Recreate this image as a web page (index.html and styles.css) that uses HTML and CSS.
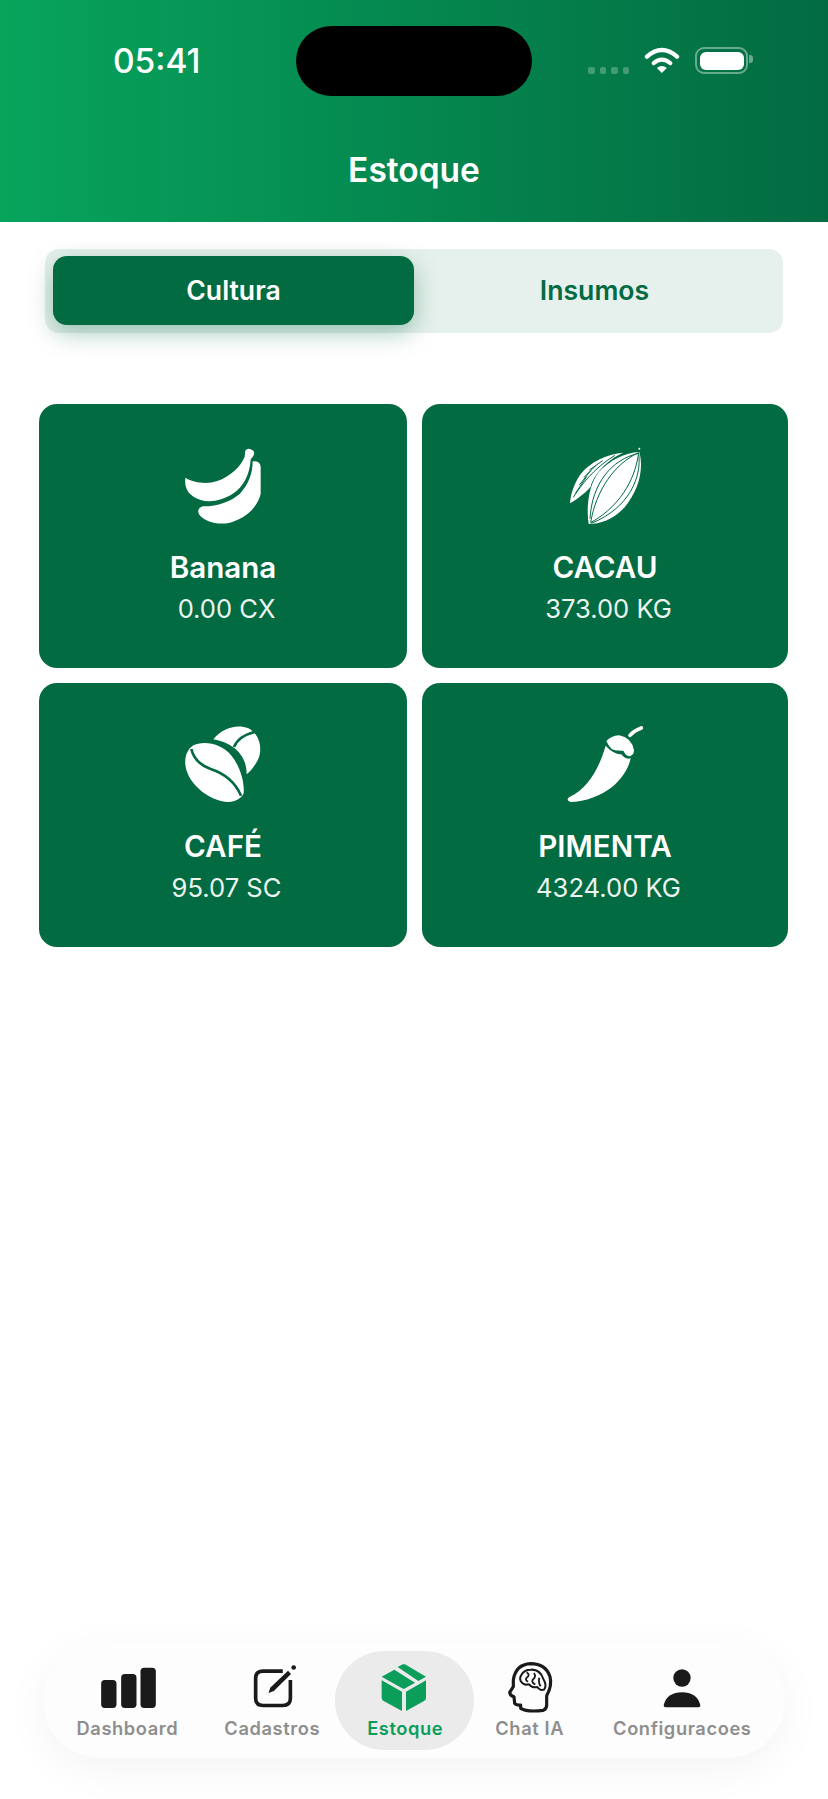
FILE: index.html
```html
<!DOCTYPE html>
<html lang="pt-BR">
<head>
    <meta charset="UTF-8">
    <meta name="viewport" content="width=device-width, initial-scale=1.0">
    <title>Estoque</title>
    <link rel="stylesheet" href="styles.css">
</head>
<body>
    <div class="app">
        <header class="header">
            <div class="status-bar">
                <span class="time">05:41</span>
                <div class="island"></div>
                <div class="status-icons">
                    <div class="signal"><i></i><i></i><i></i><i></i></div>
                    <svg class="wifi" viewBox="245 50 115 84">
                        <path d="M257 82Q302 42 348 82" fill="none" stroke="#fff" stroke-width="13" stroke-linecap="round"/>
                        <path d="M277 102Q302 80 328 102" fill="none" stroke="#fff" stroke-width="12" stroke-linecap="round"/>
                        <path d="M287 116Q302 104 317 116L302 131Z" fill="#fff"/>
                    </svg>
                    <div class="battery"><div class="battery-level"></div></div>
                </div>
            </div>
            <h1 class="title">Estoque</h1>
        </header>

        <div class="tabs">
            <div class="tab tab-active">Cultura</div>
            <div class="tab">Insumos</div>
        </div>

        <div class="cards">
            <div class="card">
                <svg class="card-icon" viewBox="465 158 228 228">
                    <path fill="#fff" d="M466 247C490 262 530 268 562 257C600 244 632 214 644 184L646 166Q654 155 668 165Q677 172 668 185L662 192C660 228 648 262 622 285C590 313 545 324 512 314C480 302 462 285 466 247Z"/>
                    <path fill="#fff" d="M668 198Q690 196 692 214L692 296C682 335 650 368 600 382C565 390 525 380 508 358Q498 340 518 333C560 334 600 320 630 295C655 268 668 235 668 198Z"/>
                </svg>
                <div class="card-name">Banana</div>
                <div class="card-value">0.00 CX</div>
            </div>
            <div class="card">
                <svg class="card-icon" viewBox="21 24 228 228">
                    <path fill="#fff" d="M190 38C140 42 90 65 60 105C40 135 32 165 30 190C55 175 80 155 92 140C100 105 140 60 190 38Z"/>
                    <path fill="none" stroke="#036b42" stroke-width="3" d="M128 62L88 90M108 76L72 112M92 92L58 135M80 110L46 160M40 172C60 140 100 85 165 46"/>
                    <path fill="#fff" d="M238 36C252 90 236 150 194 202C160 239 120 252 86 252C78 200 86 136 116 96C150 60 195 38 238 36Z"/>
                    <path fill="none" stroke="#036b42" stroke-width="3" d="M236 38C228 100 195 190 92 248M236 38C165 70 108 150 92 248M236 40C246 110 208 204 94 250M236 40C155 58 96 130 90 236"/>
                    <circle cx="238" cy="26" r="3" fill="#fff"/>
                </svg>
                <div class="card-name">CACAU</div>
                <div class="card-value">373.00 KG</div>
            </div>
            <div class="card">
                <svg class="card-icon" viewBox="465 156 228 228">
                    <path fill="#fff" d="M550 193C575 160 620 145 655 160C690 178 700 225 682 258C672 275 662 288 650 298C650 268 640 240 612 218C595 205 572 197 550 193Z"/>
                    <path fill="none" stroke="#036b42" stroke-width="8" d="M612 216C620 195 645 178 676 170"/>
                    <path fill="#fff" d="M488 212C520 196 575 204 605 243C630 275 644 320 641 355C632 374 610 384 585 380C540 374 488 337 471 290C460 260 466 228 488 212Z"/>
                    <path fill="none" stroke="#036b42" stroke-width="8" d="M484 222C490 250 510 270 542 282C585 296 615 320 633 362"/>
                </svg>
                <div class="card-name">CAFÉ</div>
                <div class="card-value">95.07 SC</div>
            </div>
            <div class="card">
                <svg class="card-icon" viewBox="456 156 228 228">
                    <path fill="#fff" d="M572 212C590 232 608 238 619 238C628 250 636 253 647 250C642 275 626 305 596 332C560 362 510 380 466 381Q452 376 462 367C520 340 552 280 572 212Z"/>
                    <path fill="#fff" d="M574 198Q588 183 612 181Q650 188 657 226Q657 241 643 244Q632 242 625 227Q600 228 590 222Q580 212 574 198Z"/>
                    <path fill="none" stroke="#fff" stroke-width="11" stroke-linecap="round" d="M645 181Q656 168 679 159"/>
                </svg>
                <div class="card-name">PIMENTA</div>
                <div class="card-value">4324.00 KG</div>
            </div>
        </div>

        <nav class="nav">
            <div class="nav-item">
                <svg class="nav-icon nav-icon-bars" viewBox="244 126 164 144">
                    <rect x="244" y="180" width="46" height="84" rx="11" fill="#1a1a1a"/>
                    <rect x="304" y="162" width="46" height="102" rx="11" fill="#1a1a1a"/>
                    <rect x="362" y="143" width="46" height="121" rx="11" fill="#1a1a1a"/>
                </svg>
                <span>Dashboard</span>
            </div>
            <div class="nav-item">
                <svg class="nav-icon nav-icon-edit" viewBox="700 126 133 144">
                    <path fill="none" stroke="#1a1a1a" stroke-width="11" d="M790 153H730Q708 153 708 175V235Q708 257 730 257H790Q813 257 813 235V180"/>
                    <path fill="#1a1a1a" d="M747 219L752 203L806 152L815 162L763 213Z"/>
                    <circle cx="823" cy="142" r="7" fill="#1a1a1a"/>
                </svg>
                <span>Cadastros</span>
            </div>
            <div class="nav-item nav-item-active">
                <svg class="nav-icon nav-icon-box" viewBox="20 21 138 144">
                    <path fill="#0a9e5a" d="M22 65L60 44L122 83L90 101Q88 102 86 101Z"/>
                    <path fill="#0a9e5a" d="M70 36L85 28Q88 27 92 28L155 65L132 78Z"/>
                    <path fill="#0a9e5a" d="M22 76L83 110V168L28 138Q22 135 22 128Z"/>
                    <path fill="#0a9e5a" d="M155 76L95 110V168L149 138Q155 135 155 128Z"/>
                </svg>
                <span>Estoque</span>
            </div>
            <div class="nav-item">
                <svg class="nav-icon nav-icon-head" viewBox="22 21 132 144">
                    <path fill="none" stroke="#1a1a1a" stroke-width="9.5" stroke-linejoin="round" d="M60 160Q80 172 128 166Q138 162 138 150L138 122Q155 92 148 65Q135 26 90 26Q45 28 38 75L38 95L27 112Q28 122 40 125L42 145Q46 151 60 150Z"/>
                    <path fill="none" stroke="#1a1a1a" stroke-width="6" stroke-linejoin="round" d="M62 60Q70 44 90 44Q118 42 128 72Q140 92 130 104Q118 108 110 96Q95 100 85 88Q68 92 60 78Q56 68 62 60Z"/>
                    <path fill="none" stroke="#1a1a1a" stroke-width="5.5" d="M78 52Q90 60 78 68Q72 74 82 80M100 54Q108 66 96 74Q92 84 104 88M116 68Q112 82 120 94"/>
                </svg>
                <span>Chat IA</span>
            </div>
            <div class="nav-item nav-item-last">
                <svg class="nav-icon nav-icon-user" viewBox="758 126 114 144">
                    <circle cx="815" cy="174" r="26" fill="#1a1a1a"/>
                    <path fill="#1a1a1a" d="M766 262Q758 262 761 252Q772 217 815 217Q858 217 869 252Q872 262 864 262Z"/>
                </svg>
                <span>Configuracoes</span>
            </div>
        </nav>
    </div>
</body>
</html>
```

FILE: styles.css
```css
body {
    margin: 0;
    font-family: Inter, "Noto Sans", sans-serif;
    background-color: #fff;
}
.app {
    display: flex;
    flex-direction: column;
    height: 100vh;
    overflow: hidden;
}
.header {
    height: 222px;
    background: linear-gradient(90deg, #07a45c, #036b42);
    color: #fff;
}
.status-bar {
    display: grid;
    grid-template-columns: 296px 236px 1fr;
    padding-top: 26px;
}
.time {
    font-size: 33.5px;
    font-weight: 500;
    line-height: 70px;
    padding-left: 113px;
}
.island {
    height: 70px;
    background: #000;
    border-radius: 35px;
}
.status-icons {
    display: flex;
    align-items: flex-start;
    padding-left: 56px;
}
.signal {
    display: flex;
    gap: 5px;
    margin-top: 41px;
}
.signal i {
    width: 6.5px;
    height: 7px;
    border-radius: 2px;
    background: rgba(255, 255, 255, 0.25);
}
.wifi {
    width: 38px;
    height: 28px;
    margin: 20px 0 0 14px;
}
.battery {
    position: relative;
    box-sizing: border-box;
    width: 53px;
    height: 27px;
    margin: 21px 0 0 14px;
    padding: 2.5px;
    border: 2px solid rgba(255, 255, 255, 0.4);
    border-radius: 9px;
}
.battery::after {
    content: "";
    position: absolute;
    right: -7px;
    top: 6px;
    width: 4px;
    height: 8px;
    border-radius: 0 3px 3px 0;
    background: rgba(255, 255, 255, 0.4);
}
.battery-level {
    height: 100%;
    background: #fff;
    border-radius: 6px;
}
.title {
    margin: 54px 0 0;
    font-size: 33.5px;
    font-weight: 600;
    line-height: 40px;
    text-align: center;
}
.tabs {
    display: flex;
    margin: 27px 45px 0;
    padding: 7px 8px 8px;
    background: #e6f0ec;
    border-radius: 14px;
}
.tab {
    flex: 1;
    height: 69px;
    line-height: 69px;
    text-align: center;
    font-size: 26.6px;
    font-weight: 600;
    color: #036b42;
    border-radius: 14px;
}
.tab-active {
    background: #036b42;
    color: #fff;
    box-shadow: 0 8px 24px rgba(3, 107, 66, 0.35);
}
.cards {
    display: grid;
    grid-template-columns: 368px 366px;
    gap: 15px;
    margin: 71px 0 0 39px;
}
.card {
    display: flex;
    flex-direction: column;
    align-items: center;
    box-sizing: border-box;
    height: 264px;
    padding-top: 44px;
    background: #036b42;
    border-radius: 18px;
    color: #fff;
}
.card-icon {
    width: 76px;
    height: 76px;
    overflow: visible;
}
.card-name {
    margin-top: 26px;
    font-size: 29.6px;
    font-weight: 600;
    line-height: 34px;
}
.card-value {
    margin-top: 6.5px;
    padding-left: 7px;
    font-size: 25.6px;
    line-height: 36px;
    color: #ecf5f0;
}
.nav {
    display: flex;
    justify-content: center;
    box-sizing: border-box;
    height: 115px;
    margin: auto 43px 41px;
    padding: 8px 0;
    background: #fdfdfd;
    border-radius: 58px;
    box-shadow: 0 10px 44px rgba(0, 0, 0, 0.05);
}
.nav-item {
    display: flex;
    flex-direction: column;
    align-items: center;
    padding: 11px 23px 0;
    font-size: 18.3px;
    font-weight: 600;
    letter-spacing: 0.6px;
    line-height: 22px;
    white-space: nowrap;
    color: #8e8e8e;
}
.nav-item span {
    margin-top: 7px;
}
.nav-item-active {
    margin: 0 -2px 0 -8px;
    padding: 11px 31px 0 32px;
    background: #ebebeb;
    border-radius: 50px;
    color: #0a9e5a;
}
.nav-item-last {
    margin-left: 3px;
}
.nav-icon {
    height: 48px;
    overflow: visible;
}
.nav-icon-bars { width: 55px; margin-left: 2px; }
.nav-icon-edit { width: 44px; margin-left: 5px; }
.nav-icon-box { width: 46px; margin-left: -2px; }
.nav-icon-head { width: 44px; }
.nav-icon-user { width: 38px; }
```
